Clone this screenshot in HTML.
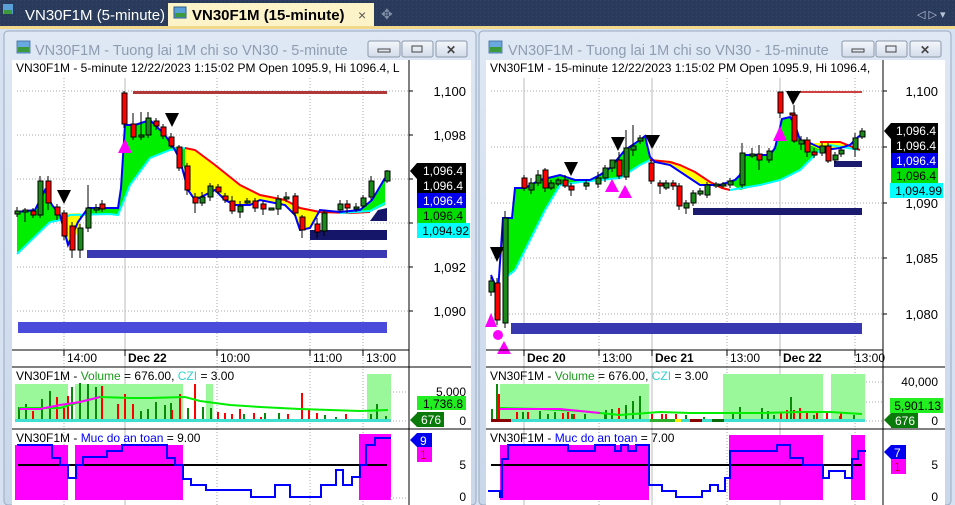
<!DOCTYPE html>
<html><head><meta charset="utf-8"><style>
html,body{margin:0;padding:0;width:955px;height:505px;overflow:hidden;background:#293a5a;font-family:"Liberation Sans",Arial,sans-serif}
svg{display:block}
</style></head><body>
<svg width="955" height="505" viewBox="0 0 955 505" xmlns="http://www.w3.org/2000/svg" font-family="Liberation Sans, Arial, sans-serif">
<defs>
<pattern id="dots" width="4" height="4" patternUnits="userSpaceOnUse"><rect width="4" height="4" fill="#293a5a"/><rect width="1" height="1" fill="#34476a"/></pattern>
<linearGradient id="wg" x1="0" y1="0" x2="0" y2="1"><stop offset="0" stop-color="#dfe8f4"/><stop offset="1" stop-color="#c9d7ea"/></linearGradient>
<linearGradient id="bg" x1="0" y1="0" x2="0" y2="1"><stop offset="0" stop-color="#f4f7fb"/><stop offset="1" stop-color="#d3dceb"/></linearGradient>
</defs>
<rect width="955" height="505" fill="url(#dots)"/>
<!-- tabs -->
<rect x="3" y="4" width="10" height="10" fill="#5aa0d8"/><rect x="4" y="10" width="8" height="4" fill="#3c9a3c"/>
<text x="25" y="20" font-size="15" fill="#ffffff">VN30F1M (5-minute)</text>
<rect x="168" y="3" width="206" height="24" fill="#fdf3c8"/>
<rect x="174" y="7" width="12" height="11" fill="#5aa0d8" stroke="#2a5a8a" stroke-width="1"/><rect x="175" y="13" width="10" height="4" fill="#3c9a3c"/>
<text x="192" y="20" font-size="15" font-weight="bold" fill="#000">VN30F1M (15-minute)</text>
<text x="358" y="20" font-size="14" fill="#555">×</text>
<text x="381" y="19" font-size="14" fill="#8090a8">✥</text>
<text x="917" y="18" font-size="11" fill="#b8c4d8">◁ ▷ ▾</text>
<rect x="0" y="26" width="955" height="3" fill="#f2d88a"/>
<rect x="0" y="29" width="955" height="476" fill="#d6e2f1"/>

<!-- LEFT WINDOW -->
<rect x="4" y="31" width="472" height="474" rx="4" fill="url(#wg)" stroke="#9aaac2"/>
<rect x="17" y="41" width="13" height="12" fill="#6aa8e0" stroke="#3a6a9a" stroke-width="0.8"/><rect x="18" y="47" width="11" height="5" fill="#3c9a3c"/>
<text x="35" y="55" font-size="14.5" fill="#8f9db1">VN30F1M - Tuong lai 1M chi so VN30 - 5-minute</text>
<g fill="url(#bg)" stroke="#8b98ab"><rect x="368" y="41" width="32" height="16" rx="2"/><rect x="402" y="41" width="31" height="16" rx="2"/><rect x="436" y="41" width="31" height="16" rx="2"/></g>
<rect x="378" y="49" width="12" height="3" fill="none" stroke="#444"/><rect x="412" y="46" width="10" height="6" fill="none" stroke="#444"/><text x="446" y="54" font-size="12" font-weight="bold" fill="#444">✕</text>
<rect x="12" y="60" width="459" height="445" fill="#fff"/>
<!-- right window -->
<rect x="479" y="31" width="472" height="474" rx="4" fill="url(#wg)" stroke="#9aaac2"/>
<rect x="489" y="41" width="13" height="12" fill="#6aa8e0" stroke="#3a6a9a" stroke-width="0.8"/><rect x="490" y="47" width="11" height="5" fill="#3c9a3c"/>
<text x="508" y="55" font-size="14.5" fill="#8f9db1">VN30F1M - Tuong lai 1M chi so VN30 - 15-minute</text>
<g fill="url(#bg)" stroke="#8b98ab"><rect x="842" y="41" width="32" height="16" rx="2"/><rect x="876" y="41" width="31" height="16" rx="2"/><rect x="910" y="41" width="31" height="16" rx="2"/></g>
<rect x="852" y="49" width="12" height="3" fill="none" stroke="#444"/><rect x="886" y="46" width="10" height="6" fill="none" stroke="#444"/><text x="920" y="54" font-size="12" font-weight="bold" fill="#444">✕</text>
<rect x="486" y="60" width="459" height="445" fill="#fff"/>

<!-- ========== LEFT CHART ========== -->
<g font-size="12" fill="#000">
<text x="16" y="72">VN30F1M - 5-minute 12/22/2023 1:15:02 PM Open 1095.9, Hi 1096.4, L</text>
</g>
<g stroke="#aaa" stroke-dasharray="1,2" stroke-width="1">
<line x1="17" y1="91" x2="408" y2="91"/><line x1="17" y1="135" x2="408" y2="135"/><line x1="17" y1="179" x2="408" y2="179"/><line x1="17" y1="223" x2="408" y2="223"/><line x1="17" y1="267" x2="408" y2="267"/><line x1="17" y1="311" x2="408" y2="311"/>
<line x1="64" y1="78" x2="64" y2="505"/><line x1="217" y1="78" x2="217" y2="505"/><line x1="310" y1="78" x2="310" y2="505"/><line x1="363" y1="78" x2="363" y2="505"/>
</g>
<line x1="125" y1="78" x2="125" y2="505" stroke="#bbb"/>
<line x1="409" y1="60" x2="409" y2="505" stroke="#000"/>
<g stroke="#000"><line x1="409" y1="91" x2="413" y2="91"/><line x1="409" y1="135" x2="413" y2="135"/><line x1="409" y1="179" x2="413" y2="179"/><line x1="409" y1="223" x2="413" y2="223"/><line x1="409" y1="267" x2="413" y2="267"/><line x1="409" y1="311" x2="413" y2="311"/></g>
<g font-size="13" text-anchor="end"><text x="466" y="96">1,100</text><text x="466" y="140">1,098</text><text x="466" y="272">1,092</text><text x="466" y="316">1,090</text></g>
<!-- band -->
<polygon fill="#00ee00" points="17,212 35,210 45,190 52,205 60,215 68,245 78,222 88,208 118,208 121,188 125,125 135,125 150,120 165,135 175,150 185,170 185,148 175,147 170,150 150,158 130,185 118,215 110,214 70,215 60,220 50,222 17,254"/>
<polygon fill="#ffff00" points="185,148 195,150 215,165 240,185 260,195 285,200 300,208 320,212 345,213 340,212 320,210 310,228 300,230 295,215 285,205 260,200 250,205 235,205 225,200 215,190 205,195 195,200 188,190 185,170"/>
<polygon fill="#00ee00" points="345,213 370,212 385,205 385,178 372,200 360,210 340,212"/>
<polygon fill="#ffff00" points="64,214 80,213 80,228 70,245 64,230"/>
<polyline fill="none" stroke="#00ffff" stroke-width="2" points="17,254 50,222 60,220 70,215 110,214 118,215 130,185 150,158 170,150 185,148"/>
<polyline fill="none" stroke="#ff0000" stroke-width="2" points="185,148 195,150 215,165 240,185 260,195 285,200 300,208 320,212 350,213 370,212"/>
<polyline fill="none" stroke="#00ffff" stroke-width="2" points="340,213 370,211 385,203"/>
<polyline fill="none" stroke="#0000ff" stroke-width="2" points="17,212 35,210 45,190 52,205 60,215 68,245 78,222 88,208 118,208 121,188 125,125 135,125 150,120 165,135 175,150 180,160 188,190 195,200 205,195 215,190 225,200 235,205 250,205 260,200 285,205 295,215 300,230 310,228 320,210 340,212 360,210 372,200 385,178"/>
<!-- bars -->
<rect x="133" y="91" width="254" height="3" fill="#b03838"/>
<rect x="87" y="250" width="300" height="8" fill="#3a39b3"/>
<rect x="18" y="322" width="369" height="11" fill="#4b4bdb"/>
<rect x="310" y="230" width="77" height="10" fill="#15156a"/>
<polygon points="370,221 387,221 387,208 378,210" fill="#15156a"/>
<!-- candles left -->
<g stroke="#000" stroke-width="1">
<path d="M17 207V217M25 208V222M33 208V218M40 176V218M48 176V210M57 204V220M64 210V240M72 222V258M80 224V258M88 185V232M96 204V213M102 200V212M124 91V128M133 113V140M141 112V140M148 112V138M156 118V130M163 124V139M171 133V148M179 145V171M187 163V195M195 193V213M202 192V206M210 183V201M218 184V194M225 193V203M232 196V214M240 201V218M247 198V204M255 198V212M263 201V215M278 195V215M286 192V202M295 193V216M302 215V238M317 218V238M324 210V236M340 200V212M347 200V213M356 203V212M363 195V208M371 176V200M387 170V183"/>
</g>
<g stroke="#000" stroke-width="1">
<rect x="15" y="211" width="5" height="3" fill="#1a8a1a"/><rect x="23" y="210" width="5" height="2" fill="#1a8a1a"/><rect x="31" y="211" width="5" height="4" fill="#f00"/>
<rect x="38" y="181" width="5" height="34" fill="#1a8a1a"/><rect x="46" y="181" width="5" height="22" fill="#f00"/><rect x="55" y="207" width="5" height="8" fill="#f00"/>
<rect x="62" y="213" width="5" height="23" fill="#f00"/><rect x="70" y="226" width="5" height="24" fill="#f00"/><rect x="78" y="228" width="5" height="22" fill="#1a8a1a"/>
<rect x="86" y="208" width="5" height="20" fill="#1a8a1a"/><rect x="94" y="208" width="5" height="2" fill="#1a8a1a"/><rect x="100" y="204" width="5" height="5" fill="#f00"/>
<rect x="122" y="93" width="5" height="31" fill="#f00"/><rect x="131" y="124" width="5" height="13" fill="#f00"/><rect x="139" y="135" width="5" height="2" fill="#1a8a1a"/>
<rect x="146" y="118" width="5" height="17" fill="#1a8a1a"/><rect x="154" y="121" width="5" height="5" fill="#f00"/><rect x="161" y="127" width="5" height="9" fill="#f00"/>
<rect x="169" y="137" width="5" height="9" fill="#f00"/><rect x="177" y="147" width="5" height="21" fill="#f00"/><rect x="185" y="166" width="5" height="24" fill="#f00"/>
<rect x="193" y="197" width="5" height="6" fill="#f00"/><rect x="200" y="197" width="5" height="6" fill="#1a8a1a"/><rect x="208" y="186" width="5" height="11" fill="#1a8a1a"/>
<rect x="216" y="187" width="5" height="5" fill="#f00"/><rect x="223" y="196" width="5" height="4" fill="#f00"/><rect x="230" y="201" width="5" height="10" fill="#f00"/>
<rect x="238" y="206" width="5" height="6" fill="#1a8a1a"/><rect x="245" y="201" width="5" height="2" fill="#1a8a1a"/><rect x="253" y="201" width="5" height="7" fill="#f00"/>
<rect x="261" y="204" width="5" height="5" fill="#f00"/><rect x="269" y="208" width="5" height="2" fill="#1a8a1a"/><rect x="276" y="199" width="5" height="10" fill="#1a8a1a"/>
<rect x="284" y="197" width="5" height="2" fill="#1a8a1a"/><rect x="293" y="196" width="5" height="17" fill="#f00"/><rect x="300" y="217" width="5" height="13" fill="#f00"/>
<rect x="315" y="224" width="5" height="8" fill="#f00"/><rect x="322" y="213" width="5" height="18" fill="#1a8a1a"/><rect x="338" y="204" width="5" height="6" fill="#1a8a1a"/>
<rect x="345" y="204" width="5" height="4" fill="#f00"/><rect x="354" y="207" width="5" height="2" fill="#1a8a1a"/><rect x="361" y="198" width="5" height="8" fill="#1a8a1a"/>
<rect x="369" y="181" width="5" height="16" fill="#1a8a1a"/><rect x="385" y="171" width="5" height="10" fill="#1a8a1a"/>
</g>
<polygon points="57,190 71,190 64,204" fill="#000"/><polygon points="165,113 179,113 172,127" fill="#000"/>
<polygon points="118,153 132,153 125,139" fill="#ff00ff"/>
<!-- badges left -->
<polygon points="410,171 417,163 417,179" fill="#000"/>
<rect x="417" y="163" width="49" height="15" fill="#000"/><rect x="417" y="178" width="49" height="15" fill="#000"/><rect x="417" y="193" width="49" height="15" fill="#0000ee"/><rect x="417" y="208" width="49" height="15" fill="#00dd00"/><rect x="417" y="223" width="53" height="15" fill="#00ffff"/>
<g font-size="12" text-anchor="end"><text x="463" y="175" fill="#fff">1,096.4</text><text x="463" y="190" fill="#fff">1,096.4</text><text x="463" y="205" fill="#fff">1,096.4</text><text x="463" y="220" fill="#000">1,096.4</text><text x="469" y="235" fill="#000">1,094.92</text></g>
<!-- date axis -->
<line x1="12" y1="350" x2="409" y2="350" stroke="#000"/>
<g stroke="#000"><line x1="64" y1="350" x2="64" y2="356"/><line x1="125" y1="350" x2="125" y2="356"/><line x1="217" y1="350" x2="217" y2="356"/><line x1="310" y1="350" x2="310" y2="356"/><line x1="363" y1="350" x2="363" y2="356"/></g>
<g font-size="12"><text x="67" y="362">14:00</text><text x="128" y="362" font-weight="bold">Dec 22</text><text x="220" y="362">10:00</text><text x="313" y="362">11:00</text><text x="366" y="362">13:00</text></g>
<line x1="12" y1="367" x2="471" y2="367" stroke="#000"/>
<!-- volume pane left -->
<g fill="#9af79a"><rect x="15" y="384" width="53" height="37"/><rect x="75" y="384" width="108" height="37"/><rect x="206" y="384" width="7" height="37"/><rect x="367" y="374" width="24" height="47"/></g>
<rect x="15" y="419" width="376" height="3" fill="#40e0d0"/>
<g stroke-width="2">
<path stroke="#0a8a0a" d="M19 419V407M26 419V404M42 419V399M50 419V391M72 419V387M80 419V383M88 419V384M96 419V387M141 419V411M148 419V409M156 419V402M165 419V405M171 419V403M188 419V408M195 419V410M203 419V407M211 419V408M244 419V414M265 419V413M279 419V413M325 419V415M336 419V417M371 419V414M377 419V404M386 419V416"/>
<path stroke="#ff0000" d="M33 419V411M57 419V397M64 419V408M68 419V396M102 419V386M118 419V404M125 419V394M133 419V404M172 419V410M180 419V394M195 419V384M218 419V412M225 419V413M232 419V414M240 419V409M254 419V413M261 419V417M288 419V414M302 419V393M309 419V409M317 419V413M346 419V414"/>
</g>
<polyline fill="none" stroke="#00ee00" stroke-width="2" points="19,408 60,408 80,402 100,397 130,398 150,398 185,397 200,401 230,405 260,407 300,409 330,410 360,411 388,410"/>
<polyline fill="none" stroke="#ff00ff" stroke-width="2" points="19,409 40,409 60,405 80,402 100,397"/>
<text x="16" y="380" font-size="12"><tspan>VN30F1M - </tspan><tspan fill="#1a9a1a">Volume</tspan><tspan> = 676.00, </tspan><tspan fill="#30d0d0">CZI</tspan><tspan> = 3.00</tspan></text>
<g stroke="#aaa" stroke-dasharray="1,2"><line x1="390" y1="392" x2="408" y2="392"/><line x1="390" y1="421" x2="408" y2="421"/></g>
<g font-size="12" text-anchor="end"><text x="466" y="396">5,000</text><text x="466" y="425">0</text></g>
<rect x="417" y="396" width="49" height="14" fill="#22ee22"/><text x="463" y="408" font-size="12" text-anchor="end">1,736.8</text>
<polygon points="410,420 417,413 417,427" fill="#0a7a0a"/><rect x="417" y="412" width="27" height="15" fill="#0a7a0a"/><text x="441" y="424" font-size="12" text-anchor="end" fill="#fff">676</text>
<line x1="12" y1="429" x2="471" y2="429" stroke="#000"/>
<!-- safety pane left -->
<g fill="#ff00ff"><rect x="15" y="445" width="53" height="55"/><rect x="75" y="445" width="108" height="55"/><rect x="359" y="434" width="32" height="66"/></g>
<line x1="18" y1="465" x2="387" y2="465" stroke="#000" stroke-width="2"/>
<polyline fill="none" stroke="#0000ff" stroke-width="2" points="17,445 52,445 52,458 60,458 60,465 68,465 68,478 76,478 76,465 83,465 83,457 107,457 107,451 122,451 122,445 167,445 167,458 175,458 175,465 183,465 183,479 191,479 191,485 206,485 206,490 251,490 251,497 275,497 275,485 290,485 290,497 321,497 321,485 336,485 336,470 343,470 343,485 352,485 352,477 360,477 360,465 366,465 366,445 375,445 375,438 391,438"/>
<text x="16" y="442" font-size="12"><tspan>VN30F1M - </tspan><tspan fill="#0000ff">Muc do an toan</tspan><tspan> = 9.00</tspan></text>
<g stroke="#aaa" stroke-dasharray="1,2"><line x1="390" y1="498" x2="408" y2="498"/></g>
<g font-size="12" text-anchor="end"><text x="466" y="469">5</text><text x="466" y="501">0</text></g>
<polygon points="410,440 417,433 417,447" fill="#0000ee"/><rect x="417" y="433" width="15" height="14" fill="#0000ee"/><text x="420" y="445" font-size="12" fill="#fff">9</text>
<rect x="417" y="447" width="15" height="15" fill="#ff00ff"/><text x="420" y="459" font-size="12" fill="#c00">1</text>

<!-- ========== RIGHT CHART ========== -->
<text x="490" y="72" font-size="12">VN30F1M - 15-minute 12/22/2023 1:15:02 PM Open 1095.9, Hi 1096.4,</text>
<g stroke="#aaa" stroke-dasharray="1,2">
<line x1="491" y1="91" x2="882" y2="91"/><line x1="491" y1="147" x2="882" y2="147"/><line x1="491" y1="203" x2="882" y2="203"/><line x1="491" y1="258" x2="882" y2="258"/><line x1="491" y1="314" x2="882" y2="314"/>
<line x1="599" y1="78" x2="599" y2="505"/><line x1="727" y1="78" x2="727" y2="505"/><line x1="855" y1="78" x2="855" y2="505"/>
</g>
<g stroke="#bbb"><line x1="524" y1="78" x2="524" y2="505"/><line x1="652" y1="78" x2="652" y2="505"/><line x1="780" y1="78" x2="780" y2="505"/></g>
<line x1="883" y1="60" x2="883" y2="505" stroke="#000"/>
<g stroke="#000"><line x1="883" y1="91" x2="887" y2="91"/><line x1="883" y1="147" x2="887" y2="147"/><line x1="883" y1="203" x2="887" y2="203"/><line x1="883" y1="258" x2="887" y2="258"/><line x1="883" y1="314" x2="887" y2="314"/></g>
<g font-size="13" text-anchor="end"><text x="938" y="96">1,100</text><text x="938" y="208">1,090</text><text x="938" y="263">1,085</text><text x="938" y="319">1,080</text></g>
<!-- band right -->
<polygon fill="#00ee00" points="503,218 512,218 515,188 525,188 540,180 560,175 575,180 590,180 600,175 610,168 625,150 640,140 645,136 650,157 650,160 640,165 620,178 600,180 580,182 560,185 545,210 530,240 515,270 503,280"/>
<polygon fill="#ffff00" points="650,157 655,162 670,165 685,175 700,185 720,185 730,190 722,188 710,182 695,172 680,165 670,162 655,160"/>
<polygon fill="#ffff00" points="650,159 672,161 690,170 705,180 715,185 700,186 685,176 670,166 655,163"/>
<polygon fill="#00ee00" points="730,183 735,180 740,175 745,155 770,155 775,148 782,119 790,117 795,125 800,140 810,143 822,145 820,150 810,160 800,170 780,180 760,185 740,190"/>
<polygon fill="#ffff00" points="815,143 840,143 860,150 850,147 840,148 825,152 810,145"/>
<polyline fill="none" stroke="#00ffff" stroke-width="2" points="503,280 515,270 530,240 545,210 560,185 580,182 600,180 620,178 640,165 650,160"/>
<polyline fill="none" stroke="#ff0000" stroke-width="2" points="650,160 670,162 680,165 695,172 710,182 722,188 730,190"/>
<polyline fill="none" stroke="#00ffff" stroke-width="2" points="730,190 760,185 780,180 800,170 810,160 820,150 830,145 860,150"/>
<polyline fill="none" stroke="#ff0000" stroke-width="2" points="820,142 840,142 860,150"/>
<polyline fill="none" stroke="#0000ff" stroke-width="2" points="491,275 498,292 503,218 512,218 515,188 525,188 540,180 560,175 575,180 590,180 600,175 610,168 625,150 640,140 645,136 650,157 655,162 670,165 685,175 700,185 720,185 735,180 740,175 745,155 770,155 775,148 782,119 790,117 795,125 800,140 810,143 825,150 840,148 850,145 858,137 864,133"/>
<rect x="800" y="91" width="62" height="2" fill="#d04040"/>
<rect x="693" y="208" width="169" height="7" fill="#1a1a6e"/>
<rect x="834" y="161" width="28" height="6" fill="#1a1a6e"/>
<rect x="511" y="323" width="351" height="11" fill="#3838b0"/>
<!-- candles right -->
<g stroke="#000" stroke-width="1">
<path d="M491 277V296M497 278V325M505 211V328M524 175V191M531 178V194M538 170V186M545 168V192M551 180V190M558 178V186M565 175V188M571 183V196M586 180V190M598 172V188M605 165V182M612 160V172M619 152V179M626 130V180M633 125V156M640 135V144M651 160V184M660 180V194M666 180V190M673 180V190M679 183V210M686 200V214M693 190V206M700 188V196M707 182V198M716 182V188M723 182V188M730 178V188M742 143V188M752 148V158M759 145V170M769 148V163M780 92V118M794 105V143M801 136V150M807 137V157M814 148V158M822 143V156M828 143V163M835 152V163M841 147V157M855 133V157M862 128V139"/>
</g>
<g stroke="#000" stroke-width="1">
<rect x="489" y="281" width="5" height="11" fill="#1a8a1a"/><rect x="495" y="283" width="5" height="37" fill="#f00"/><rect x="503" y="218" width="5" height="105" fill="#1a8a1a"/>
<rect x="522" y="178" width="5" height="10" fill="#f00"/><rect x="529" y="183" width="5" height="7" fill="#1a8a1a"/><rect x="536" y="175" width="5" height="8" fill="#1a8a1a"/>
<rect x="543" y="170" width="5" height="18" fill="#f00"/><rect x="549" y="183" width="5" height="5" fill="#1a8a1a"/><rect x="556" y="180" width="5" height="4" fill="#1a8a1a"/>
<rect x="563" y="180" width="5" height="6" fill="#f00"/><rect x="569" y="186" width="5" height="4" fill="#f00"/><rect x="584" y="183" width="5" height="3" fill="#1a8a1a"/>
<rect x="596" y="178" width="5" height="6" fill="#1a8a1a"/><rect x="603" y="168" width="5" height="10" fill="#1a8a1a"/><rect x="610" y="160" width="5" height="8" fill="#1a8a1a"/>
<rect x="617" y="160" width="5" height="16" fill="#f00"/><rect x="624" y="148" width="5" height="29" fill="#1a8a1a"/><rect x="631" y="146" width="5" height="4" fill="#1a8a1a"/>
<rect x="638" y="138" width="5" height="3" fill="#1a8a1a"/><rect x="649" y="163" width="5" height="18" fill="#f00"/><rect x="658" y="183" width="5" height="3" fill="#f00"/>
<rect x="664" y="183" width="5" height="5" fill="#1a8a1a"/><rect x="671" y="183" width="5" height="3" fill="#f00"/><rect x="677" y="186" width="5" height="20" fill="#f00"/>
<rect x="684" y="203" width="5" height="5" fill="#1a8a1a"/><rect x="691" y="193" width="5" height="10" fill="#1a8a1a"/><rect x="698" y="191" width="5" height="3" fill="#1a8a1a"/>
<rect x="705" y="185" width="5" height="10" fill="#1a8a1a"/><rect x="714" y="184" width="5" height="2" fill="#1a8a1a"/><rect x="721" y="184" width="5" height="2" fill="#1a8a1a"/>
<rect x="728" y="181" width="5" height="4" fill="#1a8a1a"/><rect x="740" y="153" width="5" height="32" fill="#1a8a1a"/><rect x="750" y="154" width="5" height="2" fill="#1a8a1a"/>
<rect x="757" y="154" width="5" height="6" fill="#f00"/><rect x="767" y="151" width="5" height="9" fill="#1a8a1a"/><rect x="778" y="92" width="5" height="21" fill="#f00"/>
<rect x="790" y="113" width="5" height="2" fill="#f00"/><rect x="792" y="115" width="5" height="26" fill="#f00"/><rect x="799" y="140" width="5" height="4" fill="#1a8a1a"/>
<rect x="805" y="140" width="5" height="12" fill="#f00"/><rect x="812" y="152" width="5" height="3" fill="#f00"/><rect x="820" y="146" width="5" height="7" fill="#1a8a1a"/>
<rect x="826" y="146" width="5" height="15" fill="#f00"/><rect x="833" y="155" width="5" height="5" fill="#1a8a1a"/><rect x="839" y="150" width="5" height="4" fill="#1a8a1a"/>
<rect x="853" y="138" width="5" height="11" fill="#1a8a1a"/><rect x="860" y="131" width="5" height="6" fill="#1a8a1a"/>
</g>
<g fill="#000"><polygon points="490,247 504,247 497,262"/><polygon points="564,162 578,162 571,176"/><polygon points="611,137 625,137 618,151"/><polygon points="645,135 660,135 652,149"/><polygon points="786,91 801,91 793,105"/></g>
<g fill="#ff00ff"><polygon points="485,327 497,327 491,313"/><polygon points="605,192 619,192 612,179"/><polygon points="618,198 632,198 625,185"/><polygon points="773,141 787,141 780,126"/><polygon points="497,354 511,354 504,341"/><circle cx="498" cy="335" r="5"/></g>
<!-- badges right -->
<polygon points="884,131 891,123 891,139" fill="#000"/>
<rect x="891" y="123" width="47" height="15" fill="#000"/><rect x="891" y="138" width="47" height="15" fill="#000"/><rect x="891" y="153" width="47" height="15" fill="#0000ee"/><rect x="891" y="168" width="47" height="15" fill="#00dd00"/><rect x="890" y="183" width="53" height="15" fill="#00ffff"/>
<g font-size="12" text-anchor="end"><text x="936" y="135" fill="#fff">1,096.4</text><text x="936" y="150" fill="#fff">1,096.4</text><text x="936" y="165" fill="#fff">1,096.4</text><text x="936" y="180" fill="#000">1,096.4</text><text x="942" y="195" fill="#000">1,094.99</text></g>
<!-- date axis right -->
<line x1="486" y1="350" x2="883" y2="350" stroke="#000"/>
<g stroke="#000"><line x1="524" y1="350" x2="524" y2="356"/><line x1="599" y1="350" x2="599" y2="356"/><line x1="652" y1="350" x2="652" y2="356"/><line x1="727" y1="350" x2="727" y2="356"/><line x1="780" y1="350" x2="780" y2="356"/><line x1="855" y1="350" x2="855" y2="356"/></g>
<g font-size="12"><text x="527" y="362" font-weight="bold">Dec 20</text><text x="602" y="362">13:00</text><text x="655" y="362" font-weight="bold">Dec 21</text><text x="730" y="362">13:00</text><text x="783" y="362" font-weight="bold">Dec 22</text><text x="855" y="362">13:00</text></g>
<line x1="486" y1="367" x2="945" y2="367" stroke="#000"/>
<!-- volume right -->
<g fill="#9af79a"><rect x="500" y="384" width="149" height="38"/><rect x="723" y="374" width="100" height="48"/><rect x="831" y="374" width="34" height="48"/></g>
<rect x="491" y="419" width="374" height="3" fill="#40e0d0"/>
<rect x="491" y="419" width="20" height="3" fill="#8a0000"/><rect x="650" y="419" width="30" height="3" fill="#2ab02a"/><rect x="675" y="419" width="6" height="3" fill="#ffee00"/><rect x="690" y="419" width="12" height="3" fill="#8a0000"/><rect x="712" y="419" width="12" height="3" fill="#0a6a0a"/>
<g stroke-width="2">
<path stroke="#0a8a0a" d="M492 419V409M497 419V384M523 419V412M540 419V411M548 419V414M555 419V412M572 419V414M585 419V414M605 419V414M606 419V410M612 419V409M626 419V405M633 419V401M640 419V396M686 419V415M704 419V417M733 419V413M740 419V407M762 419V408M768 419V411M774 419V415M791 419V397M814 419V415M840 419V416M854 419V415"/>
<path stroke="#ff0000" d="M499 419V394M517 419V412M528 419V412M563 419V413M568 419V412M574 419V414M619 419V408M652 419V414M662 419V414M666 419V414M676 419V414M781 419V412M787 419V410M794 419V410M800 419V408M807 419V412M817 419V412M827 419V413M841 419V412"/>
</g>
<polyline fill="none" stroke="#00ee00" stroke-width="2" points="500,408 540,409 580,411 600,413 620,415 660,412 690,413 720,413 760,413 800,412 830,412 862,414"/>
<polyline fill="none" stroke="#ff00ff" stroke-width="2" points="500,409 520,409 560,409 600,413"/>
<text x="490" y="380" font-size="12"><tspan>VN30F1M - </tspan><tspan fill="#1a9a1a">Volume</tspan><tspan> = 676.00, </tspan><tspan fill="#30d0d0">CZI</tspan><tspan> = 3.00</tspan></text>
<g stroke="#aaa" stroke-dasharray="1,2"><line x1="866" y1="382" x2="882" y2="382"/><line x1="866" y1="402" x2="882" y2="402"/><line x1="866" y1="421" x2="882" y2="421"/></g>
<g font-size="12" text-anchor="end"><text x="938" y="386">40,000</text><text x="938" y="425">0</text></g>
<rect x="890" y="398" width="53" height="15" fill="#22ee22"/><text x="941" y="410" font-size="12" text-anchor="end">5,901.13</text>
<polygon points="884,420 891,413 891,427" fill="#0a7a0a"/><rect x="891" y="413" width="27" height="15" fill="#0a7a0a"/><text x="915" y="425" font-size="12" text-anchor="end" fill="#fff">676</text>
<line x1="486" y1="429" x2="945" y2="429" stroke="#000"/>
<!-- safety right -->
<g fill="#ff00ff"><rect x="500" y="445" width="149" height="55"/><rect x="729" y="435" width="94" height="65"/><rect x="851" y="435" width="14" height="65"/></g>
<line x1="491" y1="465" x2="862" y2="465" stroke="#000" stroke-width="2"/>
<polyline fill="none" stroke="#0000ff" stroke-width="2" points="488,491 500,491 500,497 502,497 502,459 508,459 508,445 568,445 568,451 595,451 595,445 615,445 615,451 621,451 621,445 628,445 628,451 636,451 636,445 649,445 649,485 662,485 662,491 676,491 676,497 702,497 702,491 710,491 710,485 718,485 718,491 725,491 725,478 730,478 730,451 777,451 777,445 790,445 790,458 803,458 803,465 823,465 823,478 829,478 829,471 845,471 845,478 852,478 852,459 858,459 858,451 866,451"/>
<text x="490" y="442" font-size="12"><tspan>VN30F1M - </tspan><tspan fill="#0000ff">Muc do an toan</tspan><tspan> = 7.00</tspan></text>
<g font-size="12" text-anchor="end"><text x="938" y="469">5</text><text x="938" y="501">0</text></g>
<polygon points="884,452 891,445 891,459" fill="#0000ee"/><rect x="891" y="445" width="15" height="14" fill="#0000ee"/><text x="894" y="457" font-size="12" fill="#fff">7</text>
<rect x="891" y="459" width="15" height="15" fill="#ff00ff"/><text x="894" y="471" font-size="12" fill="#c00">1</text>
</svg>
</body></html>
